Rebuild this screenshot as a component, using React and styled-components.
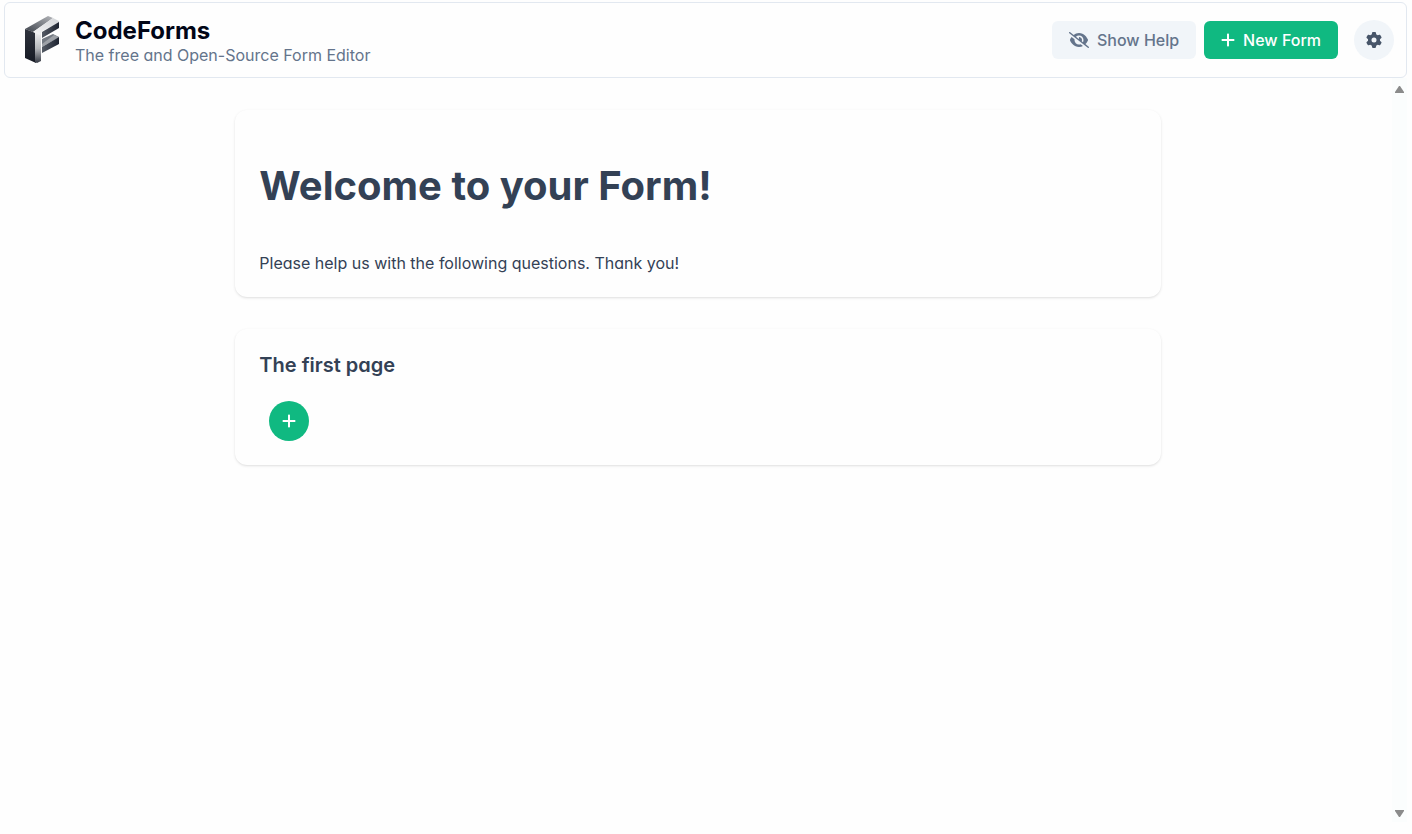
import React from "react";
import styled, { createGlobalStyle, css } from "styled-components";
import { FaEyeSlash, FaGear, FaPlus } from "react-icons/fa6";

const GlobalStyle = createGlobalStyle`
  *, *::before, *::after { box-sizing: border-box; }
  body {
    margin: 0;
    background: #fefefe;
    color: #334155;
    font-family: Inter, "Liberation Sans", sans-serif;
    font-size: 16px;
    line-height: 20px;
    font-feature-settings: "cv02", "cv03", "cv04", "cv11";
  }
  h1, h2, p { margin: 0; }
`;

const Page = styled.div`
  display: flex;
  flex-direction: column;
  min-height: 100vh;
  padding: 2px 5px 12px 4px;
`;

const Header = styled.header`
  display: flex;
  align-items: center;
  justify-content: space-between;
  padding: 11px 12px;
  border: 1px solid #e2e8f0;
  border-radius: 6px;
`;

const Brand = styled.div`
  display: flex;
  align-items: center;
  gap: 2px;
`;

const BrandText = styled.div`
  padding-top: 4px;
`;

const BrandName = styled.div`
  color: #020617;
  font-size: 24px;
  font-weight: 700;
  line-height: 26px;
`;

const Tagline = styled.div`
  color: #64748b;
  line-height: 22px;
`;

const Actions = styled.div`
  display: flex;
  align-items: center;
  gap: 8px;
`;

const buttonBase = css`
  display: flex;
  align-items: center;
  justify-content: center;
  border: 0;
  font: inherit;
  font-feature-settings: inherit;
  cursor: pointer;
  background: ${(p) => (p.$primary ? "#10b981" : "#f1f5f9")};
  color: ${(p) => (p.$primary ? "#ffffff" : "#64748b")};
`;

const Button = styled.button`
  ${buttonBase}
  gap: 8px;
  height: 38px;
  padding: 0 17px;
  border-radius: 6px;
  font-weight: 500;
`;

const RoundButton = styled.button`
  ${buttonBase}
  width: 40px;
  height: 40px;
  padding: 0;
  border-radius: 50%;
`;

const SettingsButton = styled(RoundButton)`
  margin-left: 8px;
  color: #475569;
`;

const HideIcon = styled(FaEyeSlash)`
  width: 20px;
  height: 16px;
`;

const PlusIcon = styled(FaPlus)`
  width: 14px;
  height: 16px;
`;

const Body = styled.div`
  display: flex;
  flex: 1;
`;

const Content = styled.main`
  display: flex;
  flex: 1;
  flex-direction: column;
  align-items: center;
  gap: 32px;
  padding-top: 32px;
`;

const Card = styled.section`
  width: calc(200% / 3);
  padding: 24px;
  border-radius: 12px;
  background: #fefefe;
  box-shadow: 0 1px 3px rgba(0, 0, 0, 0.1), 0 1px 2px -1px rgba(0, 0, 0, 0.1);
`;

const FormTitle = styled.h1`
  padding: 28px 0 43px;
  font-size: 40px;
  font-weight: 700;
  line-height: 48px;
`;

const PageTitle = styled.h2`
  padding-bottom: 24px;
  font-size: 20px;
  font-weight: 600;
  line-height: 24px;
`;

const Questions = styled.div`
  padding-left: 10px;
`;

const ScrollTrack = styled.div`
  display: flex;
  flex-direction: column;
  align-items: center;
  justify-content: space-between;
  width: 15px;
  padding: 8px 0 5px;
  background: #fbfdfd;
`;

const Arrow = styled.svg`
  display: block;
  width: 9px;
  height: 8px;
  fill: #8b8b8b;
`;

function Logo() {
  return (
    <svg width="56" height="50" viewBox="0 0 56 50" role="img" aria-label="CodeForms logo">
      <defs>
        <linearGradient id="top" x1="0" y1="1" x2="1" y2="0">
          <stop offset="0" stopColor="#3d424b" />
          <stop offset="1" stopColor="#b4b6ba" />
        </linearGradient>
        <linearGradient id="side" x1="0" y1="0" x2="0" y2="1">
          <stop offset="0" stopColor="#30343e" />
          <stop offset="1" stopColor="#151923" />
        </linearGradient>
        <linearGradient id="stem" x1="0" y1="0" x2="0" y2="1">
          <stop offset="0" stopColor="#f4f4f5" />
          <stop offset="0.55" stopColor="#b5b7bb" />
          <stop offset="1" stopColor="#343943" />
        </linearGradient>
        <linearGradient id="face" x1="0" y1="1" x2="1" y2="0">
          <stop offset="0" stopColor="#f4f4f5" />
          <stop offset="1" stopColor="#d3d5d8" />
        </linearGradient>
        <linearGradient id="arm" x1="0" y1="0" x2="1" y2="0">
          <stop offset="0" stopColor="#555b65" />
          <stop offset="1" stopColor="#1d2330" />
        </linearGradient>
      </defs>
      <path d="M8 14 31 1 36 3 16 17Z" fill="url(#top)" />
      <path d="M8 14 19 18 19 48 8 43Z" fill="url(#side)" />
      <path d="M18 17 24 16 24 46 20 48 18 47Z" fill="url(#stem)" />
      <path d="M16 17 36 3 42 6 42 8 25 16 23 20Z" fill="url(#face)" />
      <path d="M25 17 42 7 42 13 25 23Z" fill="url(#arm)" />
      <path d="M25 24 36 19 42 22 25 31Z" fill="#747a83" />
      <path d="M25 29 37 20 42 22 25 32Z" fill="#9da1a7" />
      <path d="M25 32 42 22 42 29 25 38Z" fill="url(#arm)" />
    </svg>
  );
}

export default function App() {
  return (
    <>
      <GlobalStyle />
      <Page>
        <Header>
          <Brand>
            <Logo />
            <BrandText>
              <BrandName>CodeForms</BrandName>
              <Tagline>The free and Open-Source Form Editor</Tagline>
            </BrandText>
          </Brand>
          <Actions>
            <Button type="button">
              <HideIcon />
              Show Help
            </Button>
            <Button type="button" $primary>
              <PlusIcon />
              New Form
            </Button>
            <SettingsButton type="button" aria-label="Settings">
              <FaGear />
            </SettingsButton>
          </Actions>
        </Header>
        <Body>
          <Content>
            <Card>
              <FormTitle>Welcome to your Form!</FormTitle>
              <p>Please help us with the following questions. Thank you!</p>
            </Card>
            <Card>
              <PageTitle>The first page</PageTitle>
              <Questions>
                <RoundButton type="button" $primary aria-label="Add question">
                  <PlusIcon />
                </RoundButton>
              </Questions>
            </Card>
          </Content>
          <ScrollTrack aria-hidden="true">
            <Arrow viewBox="0 0 9 8"><path d="M4 0h1l4 6v1H0V6Z" /></Arrow>
            <Arrow viewBox="0 0 9 8"><path d="M0 1h9v1L5 8H4L0 2Z" /></Arrow>
          </ScrollTrack>
        </Body>
      </Page>
    </>
  );
}
